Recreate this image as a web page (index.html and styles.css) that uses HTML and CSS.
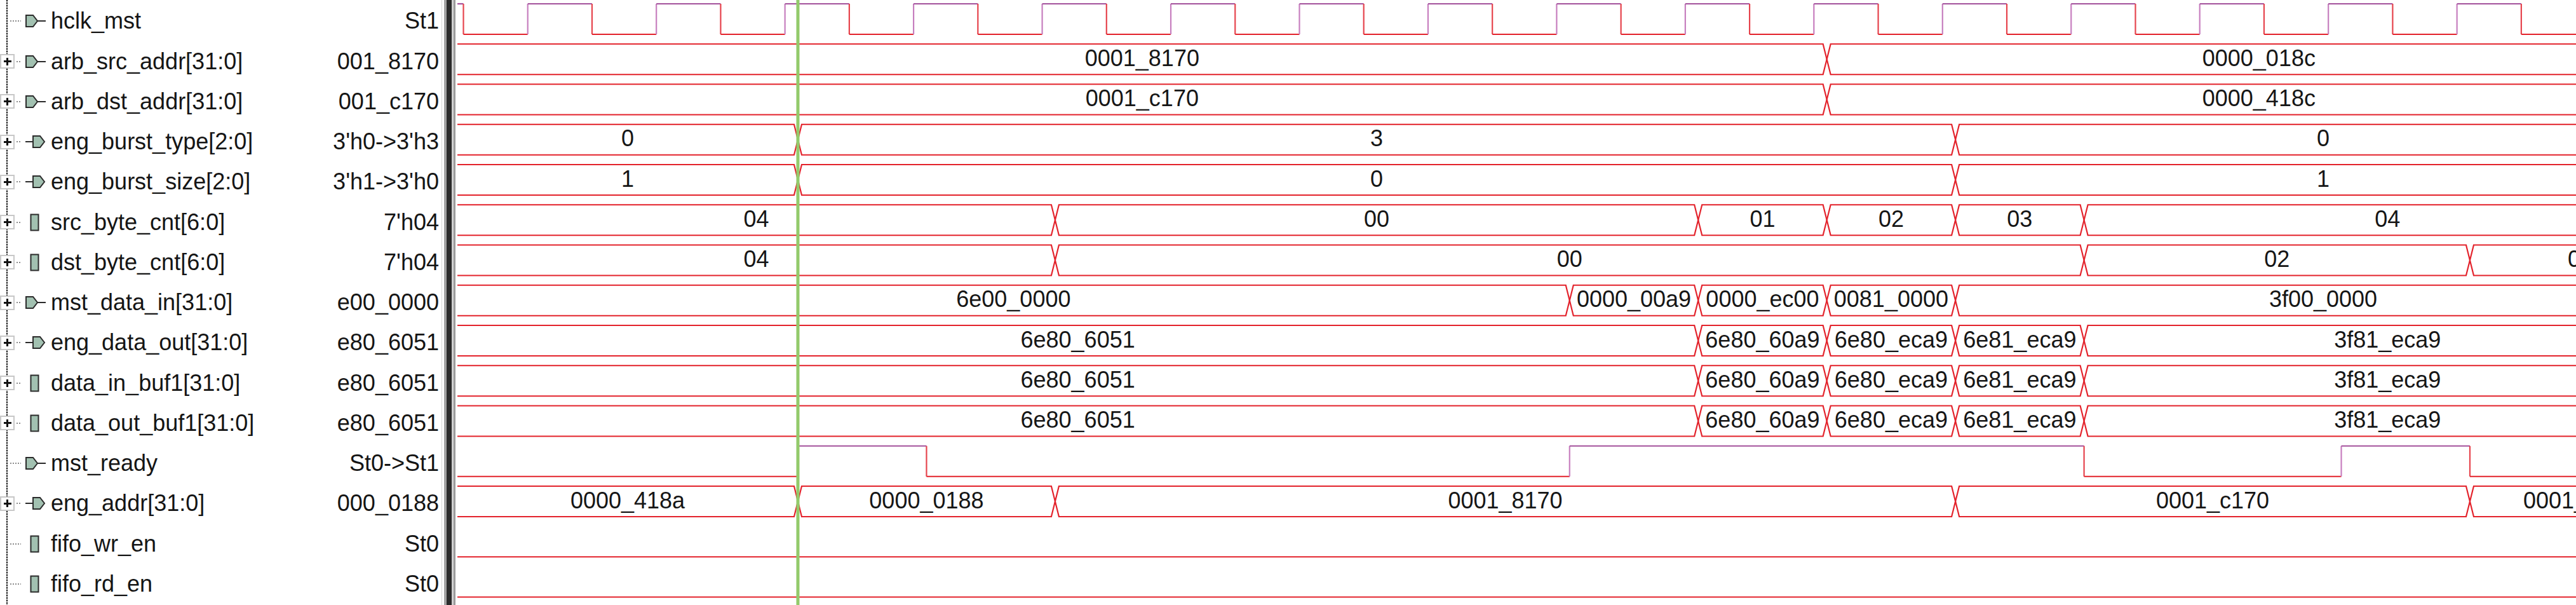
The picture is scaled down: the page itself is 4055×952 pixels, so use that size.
FILE: index.html
```html
<!DOCTYPE html>
<html>
<head>
<meta charset="utf-8">
<title>Waveform</title>
<link rel="stylesheet" href="styles.css">
</head>
<body>
<svg class="defs" width="0" height="0" aria-hidden="true">
  <symbol id="i-out" viewBox="0 0 47 28">
    <path d="M8 5 H19 L26 14 L19 23 H8 Z" fill="#a2c1b1" stroke="#2b2b2b" stroke-width="2"/>
    <path d="M26 14 H39" stroke="#2b2b2b" stroke-width="2"/>
  </symbol>
  <symbol id="i-in" viewBox="0 0 47 28">
    <path d="M7 14 H19" stroke="#2b2b2b" stroke-width="2"/>
    <path d="M19 5 H30 L37 14 L30 23 H19 Z" fill="#a2c1b1" stroke="#2b2b2b" stroke-width="2"/>
  </symbol>
  <symbol id="i-reg" viewBox="0 0 47 28">
    <rect x="15.5" y="1.5" width="12" height="25" fill="#a2c1b1" stroke="#2b2b2b" stroke-width="2"/>
  </symbol>
</svg>
<div class="app">
  <div class="names">
    <div class="row"><span class="gap"></span><span class="conn conn-long"></span><svg class="icon"><use href="#i-out"/></svg><span class="name">hclk_mst</span><span class="val">St1</span></div>
    <div class="row"><span class="exp"></span><span class="conn conn-short"></span><svg class="icon"><use href="#i-out"/></svg><span class="name">arb_src_addr[31:0]</span><span class="val">001_8170</span></div>
    <div class="row"><span class="exp"></span><span class="conn conn-short"></span><svg class="icon"><use href="#i-out"/></svg><span class="name">arb_dst_addr[31:0]</span><span class="val">001_c170</span></div>
    <div class="row"><span class="exp"></span><span class="conn conn-short"></span><svg class="icon"><use href="#i-in"/></svg><span class="name">eng_burst_type[2:0]</span><span class="val">3'h0-&gt;3'h3</span></div>
    <div class="row"><span class="exp"></span><span class="conn conn-short"></span><svg class="icon"><use href="#i-in"/></svg><span class="name">eng_burst_size[2:0]</span><span class="val">3'h1-&gt;3'h0</span></div>
    <div class="row"><span class="exp"></span><span class="conn conn-short"></span><svg class="icon"><use href="#i-reg"/></svg><span class="name">src_byte_cnt[6:0]</span><span class="val">7'h04</span></div>
    <div class="row"><span class="exp"></span><span class="conn conn-short"></span><svg class="icon"><use href="#i-reg"/></svg><span class="name">dst_byte_cnt[6:0]</span><span class="val">7'h04</span></div>
    <div class="row"><span class="exp"></span><span class="conn conn-short"></span><svg class="icon"><use href="#i-out"/></svg><span class="name">mst_data_in[31:0]</span><span class="val">e00_0000</span></div>
    <div class="row"><span class="exp"></span><span class="conn conn-short"></span><svg class="icon"><use href="#i-in"/></svg><span class="name">eng_data_out[31:0]</span><span class="val">e80_6051</span></div>
    <div class="row"><span class="exp"></span><span class="conn conn-short"></span><svg class="icon"><use href="#i-reg"/></svg><span class="name">data_in_buf1[31:0]</span><span class="val">e80_6051</span></div>
    <div class="row"><span class="exp"></span><span class="conn conn-short"></span><svg class="icon"><use href="#i-reg"/></svg><span class="name">data_out_buf1[31:0]</span><span class="val">e80_6051</span></div>
    <div class="row"><span class="gap"></span><span class="conn conn-long"></span><svg class="icon"><use href="#i-out"/></svg><span class="name">mst_ready</span><span class="val">St0-&gt;St1</span></div>
    <div class="row"><span class="exp"></span><span class="conn conn-short"></span><svg class="icon"><use href="#i-in"/></svg><span class="name">eng_addr[31:0]</span><span class="val">000_0188</span></div>
    <div class="row"><span class="gap"></span><span class="conn conn-long"></span><svg class="icon"><use href="#i-reg"/></svg><span class="name">fifo_wr_en</span><span class="val">St0</span></div>
    <div class="row"><span class="gap"></span><span class="conn conn-long"></span><svg class="icon"><use href="#i-reg"/></svg><span class="name">fifo_rd_en</span><span class="val">St0</span></div>
  </div>
  <div class="divider"></div>
  <div class="waves">
    <svg id="waves" width="3335" height="952" viewBox="720 0 3335 952"></svg>
  </div>
</div>
<script src="script.js"></script>
</body>
</html>
```

FILE: styles.css
```css
html, body {
  margin: 0;
  padding: 0;
  background: #fff;
}
body {
  width: 4055px;
  height: 952px;
  overflow: hidden;
  font-family: "Liberation Sans", Arial, sans-serif;
}
.defs {
  display: block;
  width: 0;
  height: 0;
  overflow: hidden;
}
.app {
  display: flex;
  width: 4055px;
  height: 952px;
}
.names {
  flex: 0 0 695px;
  box-sizing: border-box;
  padding: 1.7px 4px 0 0;
  display: grid;
  grid-auto-rows: 63.25px;
  align-content: start;
  background:
    repeating-linear-gradient(to bottom, #141414 0 2px, #a8a8a8 2px 4px) 10px 0 / 2px 100% no-repeat,
    #fff;
  font-size: 36px;
  color: #151515;
}
.row {
  display: flex;
  align-items: center;
  white-space: nowrap;
}
.gap {
  flex: 0 0 16px;
}
.exp {
  flex: 0 0 23px;
  height: 23px;
  box-sizing: border-box;
  border: 2px solid #c8c8c8;
  margin-right: 3px;
  background:
    linear-gradient(#111, #111) center / 12px 3px no-repeat,
    linear-gradient(#111, #111) center / 3px 12px no-repeat,
    #fff;
}
.conn {
  height: 2px;
  background: repeating-linear-gradient(to right, #8c8c8c 0 2px, transparent 2px 4px);
}
.conn-long {
  flex: 0 0 17px;
}
.conn-short {
  flex: 0 0 7px;
}
.icon {
  flex: 0 0 47px;
  width: 47px;
  height: 28px;
  display: block;
}
.name {
  flex: 1 1 auto;
}
.val {
  text-align: right;
}
.divider {
  flex: 0 0 25px;
  background: linear-gradient(to right,
    #d6d6d6 0 1px, #fff 1px 4px, #a2a2a2 4px 8px, #2b2b2b 8px 16px,
    #d0d0d0 16px 19px, #9c9c9c 19px 22px, #fff 22px);
}
.waves {
  flex: 1 1 auto;
  overflow: hidden;
}
.waves svg {
  display: block;
}
.bus {
  fill: none;
  stroke: #e3222b;
  stroke-width: 2.2;
}
.lo {
  stroke: #e3222b;
  stroke-width: 2.2;
}
.hi {
  stroke: #a3519b;
  stroke-width: 2.2;
}
.rise {
  stroke: #c77fbf;
  stroke-width: 2.2;
}
.fall {
  stroke: #e6444d;
  stroke-width: 2.2;
}
.lbl {
  font-family: "Liberation Sans", Arial, sans-serif;
  font-size: 36px;
  fill: #161616;
  text-anchor: middle;
}
.cursor {
  stroke: #93ca6b;
  stroke-width: 5;
}
```

FILE: script.js
```js
(function () {
  var NS = 'http://www.w3.org/2000/svg';
  var svg = document.getElementById('waves');
  var X0 = 720, XR = 4055, XV = 4236;
  var P = 202.46, T0 = 1256, W = 6, H = 48;

  function t(k) { return T0 + P * k; }
  function top(i) { return 6 + 63.25 * i; }
  function el(name, attrs, cls) {
    var e = document.createElementNS(NS, name);
    for (var k in attrs) e.setAttribute(k, attrs[k]);
    if (cls) e.setAttribute('class', cls);
    svg.appendChild(e);
    return e;
  }

  function bus(i, ks, labels) {
    var y0 = top(i), y1 = y0 + H;
    var xs = ks.map(t);
    var a = 'M' + X0 + ' ' + y0, b = 'M' + X0 + ' ' + y1;
    var ya = y0;
    xs.forEach(function (x) {
      var na = (ya === y0) ? y1 : y0;
      a += ' H' + (x - W) + ' L' + (x + W) + ' ' + na;
      b += ' H' + (x - W) + ' L' + (x + W) + ' ' + ya;
      ya = na;
    });
    a += ' H' + (XR + 10);
    b += ' H' + (XR + 10);
    el('path', { d: a }, 'bus');
    el('path', { d: b }, 'bus');
    var bounds = [X0].concat(xs).concat([XV]);
    labels.forEach(function (s, j) {
      var tx = el('text', { x: (bounds[j] + bounds[j + 1]) / 2, y: y0 + 34.5 }, 'lbl');
      tx.textContent = s;
    });
  }

  function bit(i, edges, init) {
    var y0 = top(i), y1 = y0 + H;
    var lvl = init, x = X0;
    var pts = edges.concat([XR + 10]);
    pts.forEach(function (e) {
      var y = lvl ? y0 : y1;
      el('line', { x1: x, y1: y, x2: e, y2: y }, lvl ? 'hi' : 'lo');
      if (e <= XR) {
        el('line', { x1: e, y1: y0, x2: e, y2: y1 }, lvl ? 'fall' : 'rise');
      }
      lvl = !lvl;
      x = e;
    });
  }

  // clock
  var clk = [];
  for (var n = 0; ; n++) {
    var e = 729.5 + n * (P / 2);
    if (e > XR) break;
    clk.push(e);
  }
  bit(0, clk, true);

  bus(1, [8], ['0001_8170', '0000_018c']);
  bus(2, [8], ['0001_c170', '0000_418c']);
  bus(3, [0, 9], ['0', '3', '0']);
  bus(4, [0, 9], ['1', '0', '1']);
  bus(5, [2, 7, 8, 9, 10], ['04', '00', '01', '02', '03', '04']);
  bus(6, [2, 10, 13], ['04', '00', '02', '00']);
  bus(7, [6, 7, 8, 9], ['6e00_0000', '0000_00a9', '0000_ec00', '0081_0000', '3f00_0000']);
  var dout = ['6e80_6051', '6e80_60a9', '6e80_eca9', '6e81_eca9', '3f81_eca9'];
  bus(8, [7, 8, 9, 10], dout);
  bus(9, [7, 8, 9, 10], dout);
  bus(10, [7, 8, 9, 10], dout);
  bit(11, [t(0), t(1), t(6), t(10), t(12), t(13)], false);
  bus(12, [0, 2, 9, 13], ['0000_418a', '0000_0188', '0001_8170', '0001_c170', '0001_8170']);
  bit(13, [], false);
  bit(14, [], false);

  el('line', { x1: T0, y1: 0, x2: T0, y2: 952 }, 'cursor');
})();
```
